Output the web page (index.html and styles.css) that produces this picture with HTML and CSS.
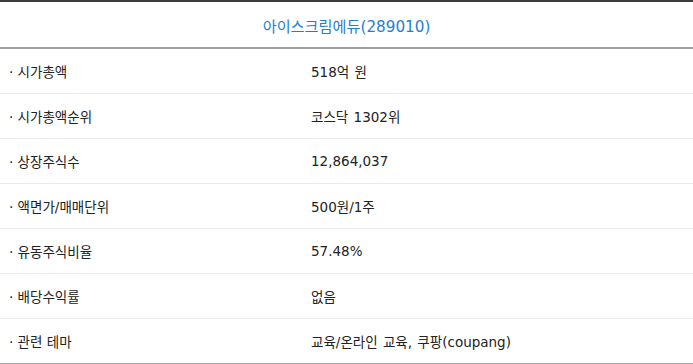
FILE: index.html
```html
<!DOCTYPE html>
<html lang="ko">
<head>
<meta charset="utf-8">
<link rel="stylesheet" href="styles.css">
</head>
<body>
<div class="panel">
  <div class="title">아이스크림에듀(289010)</div>
  <div class="rows">
    <div class="row"><div class="label">· 시가총액</div><div class="value">518억 원</div></div>
    <div class="row"><div class="label">· 시가총액순위</div><div class="value">코스닥 1302위</div></div>
    <div class="row"><div class="label">· 상장주식수</div><div class="value">12,864,037</div></div>
    <div class="row"><div class="label">· 액면가/매매단위</div><div class="value">500원/1주</div></div>
    <div class="row"><div class="label">· 유동주식비율</div><div class="value">57.48%</div></div>
    <div class="row"><div class="label">· 배당수익률</div><div class="value">없음</div></div>
    <div class="row"><div class="label">· 관련 테마</div><div class="value">교육/온라인 교육, 쿠팡(coupang)</div></div>
  </div>
</div>
</body>
</html>
```
FILE: styles.css
```css
html, body {
  margin: 0;
  padding: 0;
  background: #fff;
}
body {
  font-family: "DejaVu Sans", "Noto Sans CJK KR", sans-serif;
  color: #222;
}
.panel {
  width: 693px;
  border-top: 2px solid #3c3c3c;
  border-bottom: 2px solid #a6a6a6;
}
.title {
  height: 45px;
  display: flex;
  align-items: center;
  justify-content: center;
  font-size: 15.2px;
  color: #1f7ed3;
  border-bottom: 2px solid #a0a0a0;
}
.row {
  display: flex;
  align-items: center;
  height: 44px;
  font-size: 13.5px;
  border-bottom: 1px solid #ebebeb;
}
.row:last-child {
  border-bottom: none;
}
.label {
  width: 302px;
  padding-left: 9px;
}
.value {
  flex: 1;
  word-spacing: 1px;
}
```
